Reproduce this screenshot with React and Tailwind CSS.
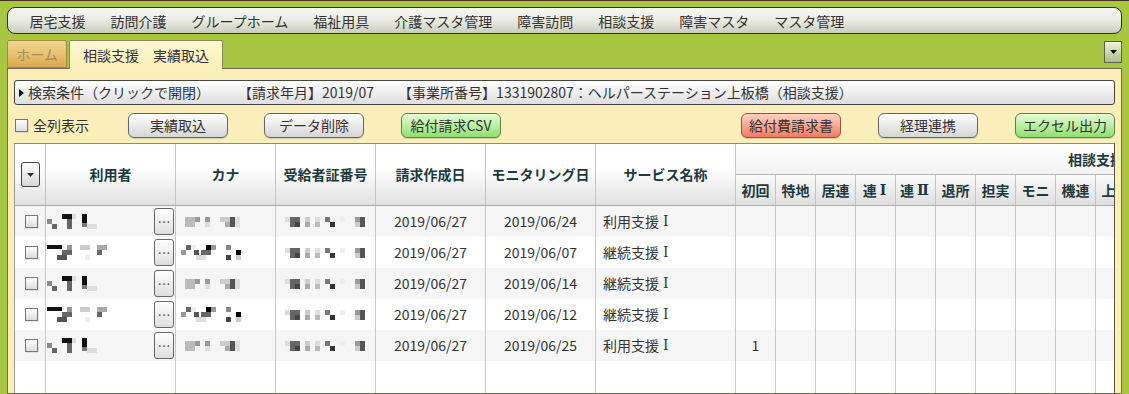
import React from "react";

const FONT = { fontFamily: '"Noto Sans CJK JP", "Noto Sans", sans-serif' };

const menu = ["居宅支援", "訪問介護", "グループホーム", "福祉用具", "介護マスタ管理", "障害訪問", "相談支援", "障害マスタ", "マスタ管理"];
const cols = [
  { w: "w-[31px]", label: "" },
  { w: "w-[130px]", label: "利用者" },
  { w: "w-[100px]", label: "カナ" },
  { w: "w-[100px]", label: "受給者証番号" },
  { w: "w-[110px]", label: "請求作成日" },
  { w: "w-[110px]", label: "モニタリング日" },
  { w: "w-[140px]", label: "サービス名称" },
];
const subs = ["初回", "特地", "居連", "連Ⅰ", "連Ⅱ", "退所", "担実", "モニ", "機連", "上限", "加算", "計画", "継続", "初加", "入院", "退院", "居宅", "医療"];

const nameA = [[0,5,5,5,"#8a8a8a"],[5,10,5,5,"#666"],[15,0,10,5,"#111"],[20,5,5,10,"#666"],[25,0,4,5,"#ddd"],[35,0,5,9,"#111"],[35,9,5,4,"#777"],[40,10,10,5,"#ddd"]];
const nameB = [[0,0,15,4,"#111"],[20,0,5,5,"#999"],[15,5,10,5,"#666"],[10,10,10,5,"#555"],[33,0,10,5,"#ccc"],[38,10,5,5,"#eee"],[50,0,10,5,"#aaa"],[50,5,5,5,"#666"]];
const kanaA = [[0,3,10,10,"#bbb"],[10,3,5,5,"#999"],[20,3,5,5,"#999"],[20,8,5,5,"#ddd"],[35,3,10,5,"#ccc"],[45,3,5,10,"#555"],[50,3,5,10,"#ddd"],[40,8,5,5,"#aaa"]];
const kanaB = [[5,0,5,5,"#666"],[0,5,5,5,"#999"],[10,0,5,5,"#eee"],[13,5,5,5,"#555"],[15,10,10,5,"#ddd"],[25,0,5,5,"#000"],[30,0,5,5,"#999"],[20,5,10,5,"#666"],[45,0,5,5,"#888"],[45,10,5,5,"#444"],[55,5,5,5,"#000"],[55,10,5,5,"#ccc"]];
const numA = [[0,3,5,5,"#ddd"],[5,3,10,10,"#666"],[10,8,5,5,"#444"],[20,3,5,5,"#ccc"],[20,8,5,5,"#aaa"],[30,3,5,5,"#ddd"],[30,8,5,5,"#bbb"],[40,3,5,5,"#777"],[45,8,5,5,"#333"],[55,3,5,5,"#eee"],[70,3,5,5,"#999"],[75,3,5,10,"#555"],[70,8,5,5,"#ccc"]];

const rows = [
  { a: true, d1: "2019/06/27", d2: "2019/06/24", svc: "利用支援", first: "" },
  { a: false, d1: "2019/06/27", d2: "2019/06/07", svc: "継続支援", first: "" },
  { a: true, d1: "2019/06/27", d2: "2019/06/14", svc: "継続支援", first: "" },
  { a: false, d1: "2019/06/27", d2: "2019/06/12", svc: "継続支援", first: "" },
  { a: true, d1: "2019/06/27", d2: "2019/06/25", svc: "利用支援", first: "1" },
];

const SERIF = { fontFamily: '"DejaVu Serif", "Liberation Serif", serif' };

function Roman({ text }) {
  // render roman numerals (Ⅰ, Ⅱ) in a serif face like the reference
  const parts = text.split(/([ⅠⅡ])/);
  return (
    <>
      {parts.map((p, i) =>
        p === "Ⅰ" || p === "Ⅱ" ? (
          <span key={i} style={SERIF} className="ml-[3px] mr-[2px]">
            {p}
          </span>
        ) : (
          <React.Fragment key={i}>{p}</React.Fragment>
        )
      )}
    </>
  );
}

function Mosaic({ rects, w }) {
  return (
    <svg width={w} height={16} className="block shrink-0">
      {rects.map(([x, y, ww, hh, c], i) => (
        <rect key={i} x={x} y={y} width={ww} height={hh} fill={c} />
      ))}
    </svg>
  );
}

function Btn({ children, kind = "n", className = "" }) {
  const k =
    kind === "g"
      ? "from-[#e6fbd6] to-[#8fe06c] border-[#5f7f4f]"
      : kind === "r"
      ? "from-[#ffd2c4] to-[#f27a60] border-[#8a5a4a]"
      : "from-[#ffffff] to-[#d6d6d6] border-[#666]";
  return (
    <div
      className={`w-[100px] h-[25px] rounded-[6px] border bg-linear-to-b ${k} flex items-center justify-center text-[14px] text-[#333] shadow-[0_1px_1px_rgba(0,0,0,0.15)] ${className}`}
    >
      {children}
    </div>
  );
}

function CheckBox() {
  return <div className="w-[13px] h-[13px] border border-[#777] bg-linear-to-b from-white to-[#dcdcdc] shadow-[1px_1px_0_rgba(0,0,0,0.08)]" />;
}

export default function App() {
  return (
    <div
      style={FONT}
      className="w-[1129px] h-[394px] overflow-hidden bg-[#a6c73f] border-t border-[#4a2f22] px-[7px] pt-[6px] flex flex-col"
    >
      {/* menu bar */}
      <div className="h-[27px] shrink-0 rounded-[8px] border border-[#2e2e2e] bg-linear-to-b from-[#f8f9f3] via-[#e9ebe1] to-[#c9cdbd] flex items-center pl-[9px]">
        {menu.map((m) => (
          <div key={m} className="px-[12.5px] text-[14px] text-[#333] leading-none">
            {m}
          </div>
        ))}
      </div>

      {/* tabs */}
      <div className="h-[28px] mt-[6px] shrink-0 flex items-end relative z-10">
        <div className="w-[60px] h-[28px] border border-[#a8883e] bg-linear-to-b from-[#f3d88e] to-[#dbab4d] flex items-center justify-center text-[14px] text-[#a38c62] rounded-t-[2px]">
          ホーム
        </div>
        <div className="ml-[2px] w-[154px] h-[29px] -mb-px border border-b-0 border-[#8d8162] bg-linear-to-b from-[#fff8cf] to-[#fbefb9] flex items-center justify-center text-[14px] text-[#333] rounded-t-[2px]">
          相談支援　実績取込
        </div>
        <div className="ml-auto self-start mt-[1px] w-[18px] h-[22px] border border-[#5b604c] bg-linear-to-b from-[#eef2df] to-[#b1bb86] flex items-center justify-center">
          <svg width="7" height="4" viewBox="0 0 7 4"><path d="M0 0H7L3.5 4Z" fill="#111" /></svg>
        </div>
      </div>

      {/* panel */}
      <div className="flex-1 border border-[#6e6b58] bg-[#fbefb9] pl-[6px] pr-[6px] pt-[11px] flex flex-col min-h-0">
        <div className="h-[25px] shrink-0 rounded-[3px] border border-[#444] bg-linear-to-b from-white to-[#dedede] flex items-center pl-[4px] text-[14px] text-[#333] whitespace-nowrap">
          <svg width="5" height="8" viewBox="0 0 5 8" className="mr-[4px]"><path d="M0 0L5 4L0 8Z" fill="#111" /></svg>
          <span>検索条件（クリックで開閉）</span>
          <span className="ml-[28px]">【請求年月】2019/07</span>
          <span className="ml-[24px]">【事業所番号】1331902807：ヘルパーステーション上板橋（相談支援）</span>
        </div>

        <div className="h-[25px] mt-[8px] shrink-0 flex items-center">
          <div className="w-[114px] flex items-center">
            <div className="ml-[1px] mr-[5px]"><CheckBox /></div>
            <span className="text-[14px] text-[#333]">全列表示</span>
          </div>
          <Btn>実績取込</Btn>
          <Btn className="ml-[36px]">データ削除</Btn>
          <Btn kind="g" className="ml-[37px]">給付請求CSV</Btn>
          <Btn kind="r" className="ml-auto">給付費請求書</Btn>
          <Btn className="ml-[37px]">経理連携</Btn>
          <Btn kind="g" className="ml-[37px]">エクセル出力</Btn>
        </div>

        {/* grid */}
        <div className="mt-[5px] flex-1 min-h-0 overflow-hidden bg-white border-l border-r border-t border-l-[#999] border-r-[#555] border-t-[#888] flex flex-col">
          {/* header */}
          <div className="h-[62px] shrink-0 flex border-b border-[#aaa]">
            {cols.map((c, i) => (
              <div
                key={i}
                className={`${c.w} shrink-0 h-full border-r border-[#c4c4c4] bg-linear-to-b from-white from-40% to-[#e1e1e1] flex items-center justify-center text-[14px] font-bold text-[#1d3a3e]`}
              >
                {i === 0 ? (
                  <div className="w-[19px] h-[25px] rounded-[3px] border border-[#444] bg-linear-to-b from-white to-[#d8d8d8] flex items-center justify-center">
                    <svg width="7" height="4" viewBox="0 0 7 4"><path d="M0 0H7L3.5 4Z" fill="#333" /></svg>
                  </div>
                ) : (
                  c.label
                )}
              </div>
            ))}
            <div className="shrink-0 flex flex-col">
              <div className="h-[31px] border-b border-[#b5b5b5] bg-linear-to-b from-white to-[#f2f2f2] flex items-center justify-center text-[14px] font-bold text-[#1d3a3e] w-[720px]">
                相談支援
              </div>
              <div className="flex-1 flex">
                {subs.map((s) => (
                  <div
                    key={s}
                    className="w-[40px] shrink-0 border-r border-[#c4c4c4] bg-linear-to-b from-[#fbfbfb] to-[#dedede] flex items-center justify-center text-[14px] font-bold text-[#1d3a3e] whitespace-nowrap overflow-hidden"
                  >
                    <Roman text={s} />
                  </div>
                ))}
              </div>
            </div>
          </div>

          {/* rows */}
          {rows.map((r, idx) => (
            <div key={idx} className={`h-[31px] shrink-0 flex text-[14px] text-[#333] ${idx % 2 === 0 ? "bg-[#f5f5f5]" : "bg-white"}`}>
              <div className="w-[31px] shrink-0 border-r border-[#c8c8c8] flex items-center justify-center pl-[2px]">
                <CheckBox />
              </div>
              <div className="w-[130px] shrink-0 border-r border-[#c8c8c8] flex items-center pl-[1px] pr-[1px]">
                <Mosaic rects={r.a ? nameA : nameB} w={62} />
                <div className="ml-auto w-[20px] h-[27px] rounded-[3px] border border-[#666] bg-linear-to-b from-white to-[#dedede] flex items-center justify-center text-[13px] text-[#555] leading-none">
                  …
                </div>
              </div>
              <div className={`w-[100px] shrink-0 border-r border-[#c8c8c8] flex items-center ${r.a ? "pl-[9px]" : "pl-[5px]"}`}>
                <Mosaic rects={r.a ? kanaA : kanaB} w={62} />
              </div>
              <div className="w-[100px] shrink-0 border-r border-[#c8c8c8] flex items-center pl-[9px]">
                <Mosaic rects={numA} w={82} />
              </div>
              <div className="w-[110px] shrink-0 border-r border-[#c8c8c8] flex items-center justify-center">{r.d1}</div>
              <div className="w-[110px] shrink-0 border-r border-[#c8c8c8] flex items-center justify-center">{r.d2}</div>
              <div className="w-[140px] shrink-0 border-r border-[#c8c8c8] flex items-center pl-[7px]">
                {r.svc}
                <span style={SERIF} className="ml-[4px]">Ⅰ</span>
              </div>
              {subs.map((s, j) => (
                <div key={s} className="w-[40px] shrink-0 border-r border-[#c8c8c8] flex items-center justify-center">
                  {j === 0 ? r.first : ""}
                </div>
              ))}
            </div>
          ))}

          {/* filler */}
          <div className="flex-1 flex bg-white">
            {cols.map((c, i) => (
              <div key={i} className={`${c.w} shrink-0 border-r border-[#c8c8c8]`} />
            ))}
            {subs.map((s) => (
              <div key={s} className="w-[40px] shrink-0 border-r border-[#c8c8c8]" />
            ))}
          </div>
        </div>
      </div>
    </div>
  );
}
